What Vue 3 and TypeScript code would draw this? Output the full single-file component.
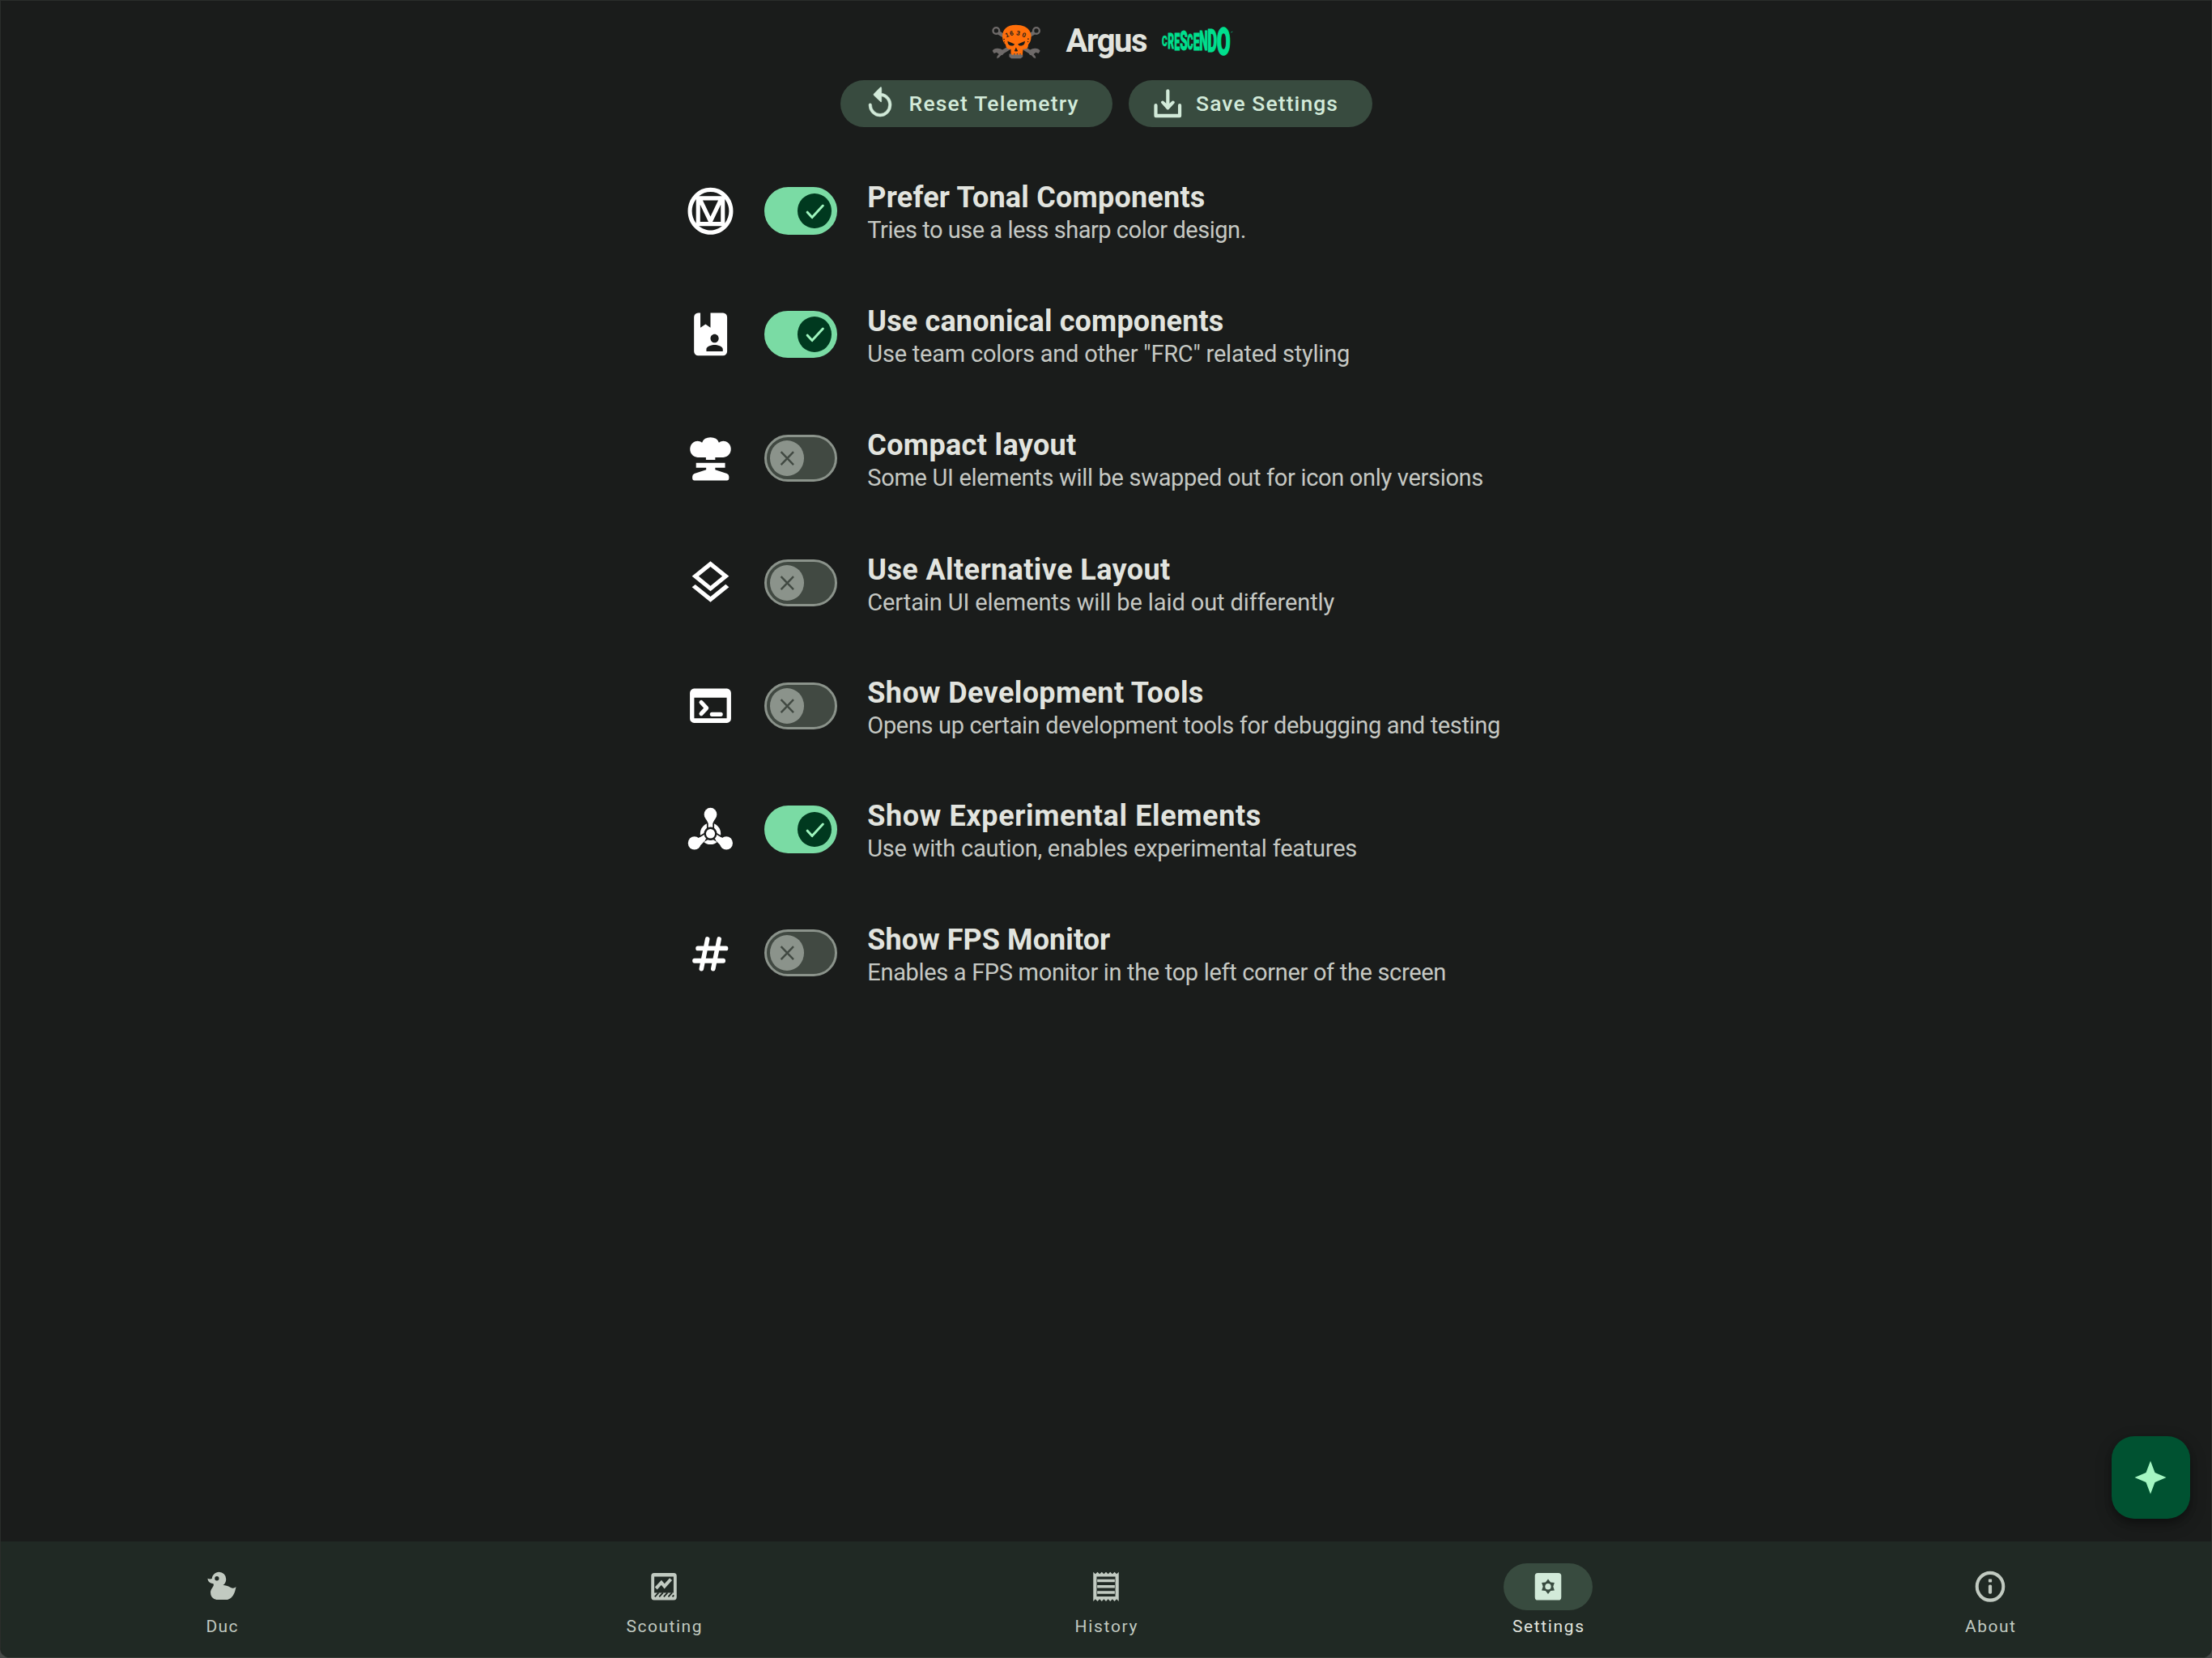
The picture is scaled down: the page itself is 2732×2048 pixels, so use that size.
<script setup lang="ts">
import { ref, type Directive } from 'vue'

interface Setting {
  id: string
  title: string
  titleWidth: number
  note: string
  noteWidth: number
}
interface NavItem {
  id: string
  label: string
  width: number
}
interface Letter {
  c: string
  x: number
  w: number
  top: number
  bottom: number
  adv: number
}

// Tracks a label so that it spans the given width exactly.
const vFit: Directive<HTMLElement, number> = {
  mounted(el, binding) {
    const natural = el.getBoundingClientRect().width
    const count = (el.textContent ?? '').length
    el.style.letterSpacing = `${(binding.value - natural) / (count - 1)}px`
    el.style.width = `${binding.value}px`
  },
}

const settings: Setting[] = [
  { id: 'tonal', title: 'Prefer Tonal Components', titleWidth: 417, note: 'Tries to use a less sharp color design.', noteWidth: 468 },
  { id: 'book', title: 'Use canonical components', titleWidth: 440, note: 'Use team colors and other "FRC" related styling', noteWidth: 596 },
  { id: 'compact', title: 'Compact layout', titleWidth: 258, note: 'Some UI elements will be swapped out for icon only versions', noteWidth: 761 },
  { id: 'layers', title: 'Use Alternative Layout', titleWidth: 374, note: 'Certain UI elements will be laid out differently', noteWidth: 577 },
  { id: 'terminal', title: 'Show Development Tools', titleWidth: 415, note: 'Opens up certain development tools for debugging and testing', noteWidth: 782 },
  { id: 'chemical', title: 'Show Experimental Elements', titleWidth: 486, note: 'Use with caution, enables experimental features', noteWidth: 605 },
  { id: 'hash', title: 'Show FPS Monitor', titleWidth: 300, note: 'Enables a FPS monitor in the top left corner of the screen', noteWidth: 715 },
]

const enabled = ref<Record<string, boolean>>({ tonal: true, book: true, chemical: true })
const toggle = (id: string) => {
  enabled.value[id] = !enabled.value[id]
}

const nav: NavItem[] = [
  { id: 'duc', label: 'Duc', width: 39 },
  { id: 'scouting', label: 'Scouting', width: 93 },
  { id: 'history', label: 'History', width: 77 },
  { id: 'settings', label: 'Settings', width: 88 },
  { id: 'about', label: 'About', width: 62 },
]
const active = ref('settings')

const letters: Letter[] = [
  { c: 'C', x: 704, w: 20, top: 98, bottom: 138, adv: 65 },
  { c: 'R', x: 726, w: 23, top: 91, bottom: 146, adv: 63 },
  { c: 'E', x: 750, w: 21, top: 87, bottom: 151, adv: 56 },
  { c: 'S', x: 771, w: 28, top: 83, bottom: 153, adv: 61 },
  { c: 'C', x: 798, w: 22, top: 93, bottom: 148, adv: 65 },
  { c: 'E', x: 820, w: 24, top: 87, bottom: 151, adv: 56 },
  { c: 'N', x: 843, w: 32, top: 83, bottom: 153, adv: 71 },
  { c: 'D', x: 873, w: 36, top: 79, bottom: 159, adv: 65 },
  { c: 'O', x: 907, w: 51, top: 67, bottom: 170, adv: 69 },
]
const place = (l: Letter) =>
  `translate(${l.x} ${l.bottom}) scale(${l.w / l.adv} ${(l.bottom - l.top) / 71})`
</script>

<template>
  <div class="app">
    <main class="page">
      <header class="brand">
        <svg class="skull" viewBox="74 58 182 130" preserveAspectRatio="none">
          <g fill="none" stroke="#6e6a69">
            <circle cx="90" cy="82" r="11.500" stroke-width="7" />
            <circle cx="238" cy="82" r="11.500" stroke-width="7" />
            <path d="M98 89L222 166M230 89L106 166" stroke-width="14" />
          </g>
          <path d="M76 157Q82 147 96 148Q116 150 118 162Q118 172 108 174Q102 184 92 186L94 177L100 170L92 163L82 167ZM252 157Q246 147 232 148Q212 150 210 162Q210 172 220 174Q226 184 236 186L234 177L228 170L236 163L246 167Z" fill="#6e6a69" />
          <path d="M138 168h50v12l-8 6h-34l-8-6z" fill="#6e6a69" />
          <path d="M163 60c34 0 56 17 56 44c0 15-5 23-11 30c0 13-5 17-19 17l-2 21h-6l-1-5h-3l-1 5h-5l-1-5h-4l-1 5h-5l-1-5h-3l-2 5h-6l-4-5v-16c-13 0-18-5-19-17c-8-7-12-15-12-30c0-27 16-44 50-44z" fill="#ff6f0a" />
          <g fill="#1a1c1b">
            <path d="M132 121l26 11c-3 6-8 7-14 6c-8-1-12-7-12-17zM196 121l-26 11c3 6 8 7 14 6c8-1 12-7 12-17z" />
            <path d="M163 144l-6 14l5 2l1-4l2 4l5-2z" />
            <circle cx="119" cy="114" r="2.500" /><circle cx="120" cy="124" r="2" /><circle cx="208" cy="113" r="2.500" /><circle cx="207" cy="123" r="2" />
          </g>
          <g class="team" fill="#1a1c1b">
            <text transform="translate(126 108) rotate(-20)">1</text>
            <text transform="translate(142 101) rotate(-12)">6</text>
            <text transform="translate(163 97) rotate(14)">3</text>
            <text transform="translate(184 103) rotate(20)">0</text>
          </g>
        </svg>
        <h1><span v-fit="101" class="fit">Argus</span></h1>
        <svg class="crescendo" viewBox="704 60 264 116" preserveAspectRatio="none">
          <text v-for="(l, i) in letters" :key="i" :transform="place(l)">{{ l.c }}</text>
          <path d="M960 87l6-3" stroke="#00df8e" stroke-width="2" />
        </svg>
      </header>

      <div class="actions">
        <button class="tonal reset" type="button">
          <svg viewBox="0 0 24 24" preserveAspectRatio="none">
            <path d="M13 1.900v3.200c4 .5 7 3.700 7 7.900a8 8 0 0 1-16 0q0-1 1-1t1 1a6 6 0 0 0 12 0c0-3-2-5.300-5-5.900v3.200q0 1.200-.8.4L7.600 6.500q-.5-.5 0-1L12.200 1q.8-.6.8.9z" fill="currentColor" stroke="currentColor" stroke-width=".3" />
          </svg>
          <span v-fit="209" class="fit">Reset Telemetry</span>
        </button>
        <button class="tonal save" type="button">
          <svg viewBox="0 0 24 24" preserveAspectRatio="none">
            <g fill="none" stroke="currentColor" stroke-width="2.400" stroke-linecap="round" stroke-linejoin="round">
              <path d="M12.200 3.600v11" /><path d="M3.700 13.400v7h16.900v-7" />
            </g>
            <path d="M7.600 10.600q1-.8 2 .1L12.200 13l2.600-2.300q1-.9 2-.1q.6.700-.1 1.400L12.900 16q-.7.600-1.400 0L7.800 12q-.8-.7-.2-1.400z" fill="currentColor" />
          </svg>
          <span v-fit="175" class="fit">Save Settings</span>
        </button>
      </div>

      <ul class="settings">
        <li v-for="s in settings" :key="s.id" class="setting">
          <svg class="glyph" viewBox="0 0 24 24" preserveAspectRatio="none" fill="#fff">
            <path v-if="s.id === 'tonal'" d="M21,12C21,9.97 20.33,8.09 19,6.38V17.63C20.33,15.97 21,14.09 21,12M17.63,19H6.38C7.06,19.55 7.95,20 9.05,20.41C10.14,20.8 11.13,21 12,21C12.88,21 13.86,20.8 14.95,20.41C16.05,20 16.94,19.55 17.63,19M11,17L7,9V17H11M17,9L13,17H17V9M12,14.53L15.75,7H8.25L12,14.53M17.63,5C15.97,3.67 14.09,3 12,3C9.91,3 8.03,3.67 6.38,5H17.63M5,17.63V6.38C3.67,8.09 3,9.97 3,12C3,14.09 3.67,15.97 5,17.63M23,12C23,15.03 21.94,17.63 19.78,19.78C17.63,21.94 15.03,23 12,23C8.97,23 6.38,21.94 4.22,19.78C2.06,17.63 1,15.03 1,12C1,8.97 2.06,6.38 4.22,4.22C6.38,2.06 8.97,1 12,1C15.03,1 17.63,2.06 19.78,4.22C21.94,6.38 23,8.97 23,12Z" />
            <path v-else-if="s.id === 'book'" fill-rule="evenodd" d="M6 2.100H7.100V9L9.600 7.400L12 9V2.100H18.100A2 2 0 0 1 20.100 4.100V20A2 2 0 0 1 18.100 22H6A2 2 0 0 1 4 20V4.100A2 2 0 0 1 6 2.100M14 12C15.110 12 16 12.900 16 14S15.110 16 14 16S12 15.110 12 14S12.900 12 14 12M18 20H10V19C10 17.670 12.670 17 14 17S18 17.670 18 19V20Z" />
            <path v-else-if="s.id === 'compact'" d="M5.800 11.300A3.700 3.800 0 1 1 7.900 4.400A4.300 3.400 0 0 1 16.100 4.400A3.700 3.800 0 1 1 18.200 11.300H14.300V12.500H9.800V11.300ZM5 13.900H19.100V16.200H14.300V17.100L20 18.900Q21 19.300 21 20.300V21Q21 22.100 20 22.100H4.200Q3.200 22.100 3.200 21V20.300Q3.200 19.300 4.200 18.900L9.900 17.100V16.200H5Z" />
            <path v-else-if="s.id === 'layers'" d="M12,18.54L19.37,12.8L21,14.07L12,21.07L3,14.07L4.62,12.81L12,18.54M12,16L3,9L12,2L21,9L12,16M12,4.53L6.26,9L12,13.47L17.74,9L12,4.53Z" />
            <g v-else-if="s.id === 'terminal'">
              <path fill-rule="evenodd" d="M4 4H20A2 2 0 0 1 22 6V18A2 2 0 0 1 20 20H4A2 2 0 0 1 2 18V6A2 2 0 0 1 4 4ZM4.100 8.200V17.900H19.900V8.200Z" />
              <path d="M7.500 10.400L10.100 13.050L7.500 15.700M12.700 16H17" fill="none" stroke="#fff" stroke-width="2" stroke-linecap="round" stroke-linejoin="round" />
            </g>
            <g v-else-if="s.id === 'chemical'">
              <circle cx="12" cy="13.900" r="4.050" fill="none" stroke="#fff" stroke-width="1.900" />
              <g fill="none">
                <path d="M12 13.900V4.900M12 13.900L4.300 18.300M12 13.900L19.700 18.300" stroke="#1a1c1b" stroke-width="3.600" />
                <path d="M12 13.900V4.900M12 13.900L4.300 18.300M12 13.900L19.700 18.300" stroke="#fff" stroke-width="2.200" />
              </g>
              <circle cx="12" cy="13.900" r="3.100" fill="#1a1c1b" />
              <circle cx="12" cy="13.900" r="2.200" />
              <circle cx="12" cy="4.900" r="3.100" /><circle cx="4.200" cy="18.300" r="3.100" /><circle cx="19.700" cy="18.300" r="3.100" />
              <path d="M9.500 6.500L10.900 9H13.100L14.500 6.500ZM6 15.900L8.500 15.200L9.600 16.900L7 19.500ZM18 15.900L15.500 15.200L14.400 16.900L17 19.500Z" />
            </g>
            <path v-else d="M10.500 5.300L7.600 19.100M16.200 5.300L13.300 19.100M5.900 9.600H19.500M4.300 15.400H18.200" stroke="#fff" stroke-width="2.200" stroke-linecap="round" fill="none" />
          </svg>
          <button class="switch" :class="{ on: enabled[s.id] }" type="button" role="switch" :aria-checked="!!enabled[s.id]" @click="toggle(s.id)">
            <span class="knob">
              <svg viewBox="0 0 24 24" preserveAspectRatio="none" fill="none" stroke="currentColor" stroke-linejoin="round">
                <path v-if="enabled[s.id]" d="M7 12.800L10.300 16.300L17.900 8.300" stroke-width="1.700" stroke-linecap="round" />
                <path v-else d="M7.800 7.800L16.600 16.600M16.600 7.800L7.800 16.600" stroke-width="1.400" />
              </svg>
            </span>
          </button>
          <div class="copy">
            <h2><span v-fit="s.titleWidth" class="fit">{{ s.title }}</span></h2>
            <p><span v-fit="s.noteWidth" class="fit">{{ s.note }}</span></p>
          </div>
        </li>
      </ul>

      <button class="fab" type="button" aria-label="Assist">
        <svg viewBox="0 0 40 42" preserveAspectRatio="none">
          <path d="M20 .5L25.500 15L39.500 21L25.500 27L20 41.500L14.500 27L.5 21L14.500 15Z" fill="currentColor" />
        </svg>
      </button>
    </main>

    <nav class="bar">
      <button v-for="n in nav" :key="n.id" class="tab" :class="{ active: active === n.id }" type="button" @click="active = n.id">
        <span class="pill">
          <svg viewBox="0 0 24 24" preserveAspectRatio="none" fill="currentColor">
            <path v-if="n.id === 'duc'" d="M8.5,5A1.5,1.5 0 0,0 7,6.500A1.500,1.500 0 0,0 8.500,8A1.500,1.500 0 0,0 10,6.500A1.500,1.500 0 0,0 8.500,5M10,2A5,5 0 0,1 15,7C15,8.700 14.150,10.200 12.860,11.100C14.440,11.250 16.220,11.610 18,12.500C21,14 22,12 22,12C22,12 21,21 15,21H9C9,21 4,21 4,16C4,13 7,12 6,10C2,10 2,6.500 2,6.500C3,7 4.240,7 5,6.650C5.190,4.050 7.360,2 10,2Z" />
            <g v-else-if="n.id === 'scouting'">
              <path fill-rule="evenodd" d="M5 2.800H19A2 2 0 0 1 21 4.800V19.200A2 2 0 0 1 19 21.200H5A2 2 0 0 1 3 19.200V4.800A2 2 0 0 1 5 2.800ZM5.200 5.200V16.300H18.800V5.200Z" />
              <path d="M6.400 13.200L10.200 9.300L12.400 11.800L16.900 7" fill="none" stroke="currentColor" stroke-width="2.300" />
              <path class="hatch" d="M5.600 19L8.200 16.200M8.700 19L11.300 16.200M11.900 19L14.500 16.200M15.100 19L17.700 16.200M18 19L19 17.900" fill="none" stroke-width="1.100" />
            </g>
            <path v-else-if="n.id === 'history'" fill-rule="evenodd" d="M19.500 3.500L18 2l-1.500 1.500L15 2l-1.500 1.500L12 2l-1.500 1.500L9 2 7.500 3.500 6 2 4.500 3.500 3 2v20l1.500-1.500L6 22l1.500-1.500L9 22l1.500-1.500L12 22l1.500-1.500L15 22l1.500-1.500L18 22l1.500-1.500L21 22V2l-1.500 1.500zM18.600 18.800H5.400V5.200h13.200zM5.800 15h12.400v2H5.800zm0-4h12.400v2H5.800zm0-4h12.400v2H5.800z" />
            <g v-else-if="n.id === 'settings'">
              <rect x="2.700" y="2.700" width="18.600" height="18.600" rx="2" />
              <path d="M12 6.900L13.800 9.100L16.500 9.400L15.600 12L16.500 14.600L13.800 14.900L12 17.100L10.200 14.900L7.500 14.600L8.400 12L7.500 9.400L10.200 9.100Z" class="gear" />
              <circle cx="12" cy="12" r="2.100" />
            </g>
            <g v-else>
              <circle cx="12" cy="12" r="9.300" fill="none" stroke="currentColor" stroke-width="2.300" />
              <rect x="10.800" y="6.900" width="2.400" height="2.200" rx=".5" />
              <rect x="10.800" y="10.800" width="2.400" height="6.200" rx="1" />
            </g>
          </svg>
        </span>
        <span v-fit="n.width" class="fit label">{{ n.label }}</span>
      </button>
    </nav>
  </div>
</template>

<style>
body {
  margin: 0;
  background: #454a47;
}
</style>

<style scoped>
* {
  box-sizing: border-box;
}
.app {
  width: 2732px;
  height: 2048px;
  display: flex;
  flex-direction: column;
  border: 1px solid #2a2d2b;
  border-bottom-color: #353b37;
  border-radius: 0 0 12px 12px;
  background: #1a1c1b;
  color: #e2e4df;
  font-family: Roboto, "Noto Sans", sans-serif;
  overflow: hidden;
}
button {
  border: 0;
  padding: 0;
  margin: 0;
  background: none;
  color: inherit;
  font: inherit;
}
.fit {
  display: inline-block;
  white-space: nowrap;
}
.page {
  position: relative;
  flex: 1;
  display: flex;
  flex-direction: column;
  align-items: center;
}
.brand {
  display: flex;
  align-items: center;
  height: 98px;
  padding-left: 15px;
}
.skull {
  width: 61px;
  height: 43px;
  margin-bottom: -2px;
}
.team {
  font: 700 24px "Liberation Sans", sans-serif;
}
h1 {
  margin: 0 17px 0 31px;
  font-size: 40px;
  font-weight: 700;
  line-height: 48px;
  padding-top: 2px;
}
.crescendo {
  width: 88px;
  height: 39px;
  overflow: visible;
  fill: #00df8e;
  stroke: #00df8e;
  stroke-width: 3;
  font: 900 100px Roboto, sans-serif;
}
.actions {
  display: flex;
  gap: 20px;
}
.tonal {
  display: flex;
  align-items: center;
  height: 58px;
  border-radius: 29px;
  background: #384b3f;
  color: #d2ead9;
  font-size: 26.500px;
  font-weight: 500;
}
.tonal svg {
  width: 42px;
  height: 43.500px;
}
.tonal .fit {
  margin-top: -2px;
}
.reset {
  width: 336px;
  padding-left: 28px;
  gap: 15px;
}
.save {
  width: 301px;
  padding-left: 27px;
  gap: 14.500px;
}
.settings {
  display: grid;
  grid-template-rows: 152.700px 153.300px 153.700px 152px 152.700px 152.600px 152px;
  width: 1039px;
  margin: 67px 0 0;
  padding: 0;
  list-style: none;
}
.setting {
  display: flex;
  align-items: flex-start;
}
.glyph {
  width: 61px;
  height: 63.500px;
  margin-top: 4.600px;
}
.switch {
  display: flex;
  align-items: center;
  width: 90px;
  height: 58.500px;
  margin: 7px 37px 0 36.800px;
  padding-left: 3.800px;
  border: 3.500px solid #8b938b;
  border-radius: 30px;
  background: #414942;
}
.knob {
  width: 42px;
  height: 43.500px;
  border-radius: 50%;
  background: #8b938b;
  color: #414942;
}
.knob svg {
  display: block;
  width: 100%;
  height: 100%;
}
.switch.on {
  justify-content: flex-end;
  padding: 0 4.200px 0 0;
  border-color: #7adba4;
  background: #7adba4;
}
.on .knob {
  background: #00391f;
  color: #9ef5be;
}
h2,
p {
  margin: 0;
  height: 40px;
  line-height: 40px;
}
h2 {
  font-size: 36px;
  font-weight: 700;
}
p {
  color: #c5c8c3;
  font-size: 29px;
  font-weight: 400;
}
.fab {
  position: absolute;
  right: 26.500px;
  bottom: 28px;
  width: 97px;
  height: 102px;
  display: flex;
  align-items: center;
  justify-content: center;
  border-radius: 28px;
  background: #005231;
  color: #a4f6c2;
  box-shadow: 0 5px 9px rgba(0, 0, 0, 0.3), 0 7px 18px 4px rgba(0, 0, 0, 0.15);
}
.fab svg {
  width: 40px;
  height: 42px;
}
.bar {
  display: flex;
  height: 143px;
  padding-top: 27px;
  background: #202924;
}
.tab {
  flex: 1;
  display: flex;
  flex-direction: column;
  align-items: center;
  color: #c1cac1;
}
.pill {
  display: flex;
  align-items: center;
  justify-content: center;
  width: 110px;
  height: 58px;
  border-radius: 29px;
}
.pill svg {
  width: 42px;
  height: 43.500px;
}
.hatch {
  stroke: #202924;
}
.active .pill {
  background: #384b3f;
  color: #d2ead9;
}
.gear {
  fill: #384b3f;
}
.label {
  margin-top: 6px;
  font-size: 21px;
  line-height: 28px;
}
.active {
  color: #e1e4de;
}
</style>
